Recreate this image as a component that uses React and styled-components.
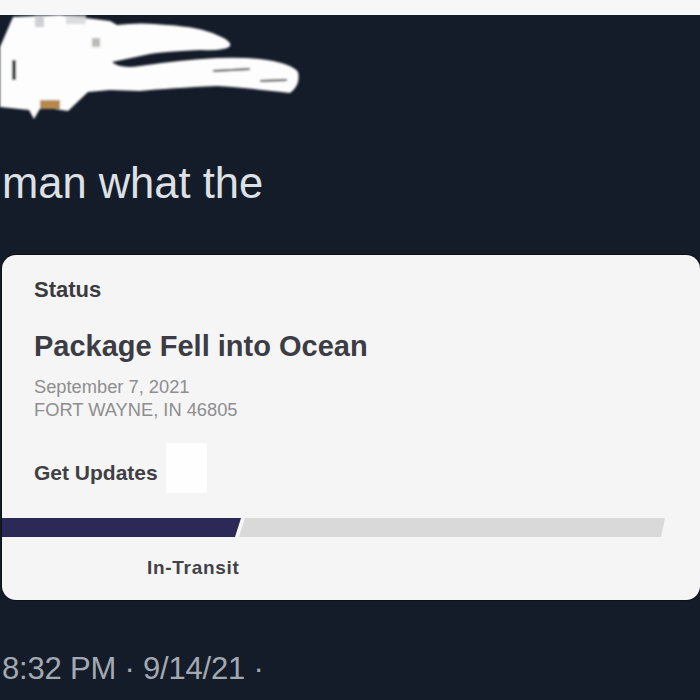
import React from 'react';
import styled, { createGlobalStyle } from 'styled-components';

const GlobalStyle = createGlobalStyle`
  html, body {
    margin: 0;
    padding: 0;
    background: #151c29;
  }
  body {
    font-family: "Liberation Sans", Arial, sans-serif;
  }
`;

const Screen = styled.div`
  width: 700px;
  height: 700px;
  overflow: hidden;
  background: #151c29;
  display: flex;
  flex-direction: column;
`;

const TopStrip = styled.div`
  height: 15px;
  flex-shrink: 0;
  background: #f7f7f7;
`;

const Header = styled.div`
  height: 100px;
  flex-shrink: 0;
  display: flex;
  align-items: flex-start;
`;

const TweetText = styled.p`
  margin: 43px 0 0 2px;
  font-size: 43.5px;
  line-height: 50px;
  color: #dde1e6;
`;

const Card = styled.div`
  margin: 47px 0 0 2px;
  width: 698px;
  height: 345px;
  box-sizing: border-box;
  flex-shrink: 0;
  background: #f5f5f5;
  border-radius: 14px;
  box-shadow: 0 0 0 1px rgba(0, 0, 0, 0.45);
  display: flex;
  flex-direction: column;
`;

const CardBody = styled.div`
  padding: 22px 32px 0;
  display: flex;
  flex-direction: column;
`;

const Label = styled.div`
  font-size: ${p => p.size || 22}px;
  line-height: ${p => p.lh || 26}px;
  font-weight: 700;
  color: ${p => p.color || '#3a3a3f'};
  letter-spacing: ${p => p.ls || 0}px;
`;

const Title = styled.h2`
  margin: 26px 0 0;
  font-size: 29px;
  line-height: 34px;
  font-weight: 700;
  color: #3b3c44;
`;

const Meta = styled.div`
  margin-top: 12px;
  font-size: 18.3px;
  line-height: 23px;
  color: #8e8e8e;
`;

const UpdatesRow = styled.div`
  margin-top: 22px;
  display: flex;
  align-items: flex-start;
  gap: 8px;
`;

const UpdatesText = styled(Label)`
  padding-top: 18px;
`;

const WhiteBox = styled.div`
  width: 41px;
  height: 50px;
  background: #fefefe;
`;

const Track = styled.div`
  margin-top: 25px;
  height: 19px;
  display: flex;
`;

const Segment = styled.div`
  height: 100%;
  width: ${p => p.w}px;
  margin-left: ${p => p.offset || 0}px;
  background: ${p => p.color};
  clip-path: ${p => p.clip};
`;

const StepLabel = styled(Label)`
  margin: 20px 0 0 145px;
`;

const Footer = styled.div`
  margin: 51px 0 0 2px;
  font-size: 31px;
  line-height: 36px;
  color: #a3a9b1;
  letter-spacing: -0.2px;
`;

// white marker scribble hiding the avatar and name
const Scribble = () => (
  <svg width="310" height="106" viewBox="0 0 310 106">
    <defs>
      <filter id="soft" x="-5%" y="-5%" width="110%" height="110%">
        <feGaussianBlur stdDeviation="0.9" />
      </filter>
    </defs>
    <g filter="url(#soft)">
      <path
        d="M13 2 L60 0 L110 6 L117 10 Q140 7 167 10 Q200 12 217 20 Q232 26 230 31 Q226 36 200 35 Q160 37 150 39 L112 47 Q120 54 140 51 Q180 45 217 43 Q250 42 267 45 Q292 49 298 57 Q301 70 290 78 Q240 72 217 71 Q170 73 140 76 L110 75 L88 77 L68 96 L41 92 L34 104 L29 95 L0 92 L0 32 Z"
        fill="#fdfdfd"
      />
      <rect x="35" y="0" width="9" height="12" fill="#c4c6c9" opacity="0.8" />
      <rect x="66" y="0" width="20" height="9" fill="#d2d4d6" opacity="0.8" />
      <rect x="92" y="23" width="8" height="9" fill="#a9aba6" opacity="0.8" />
      <rect x="12" y="45" width="4" height="20" fill="#2a2d33" />
      <rect x="40" y="85" width="20" height="9" fill="#b5884e" />
      <path d="M213 56 L250 54" stroke="#3a3d44" strokeWidth="2" />
      <path d="M260 66 L287 65" stroke="#3a3d44" strokeWidth="2" />
    </g>
  </svg>
);

const App = () => (
  <>
    <GlobalStyle />
    <Screen>
      <TopStrip />
      <Header>
        <Scribble />
      </Header>
      <TweetText>man what the</TweetText>
      <Card>
        <CardBody>
          <Label>Status</Label>
          <Title>Package Fell into Ocean</Title>
          <Meta>
            September 7, 2021
            <br />
            FORT WAYNE, IN 46805
          </Meta>
          <UpdatesRow>
            <UpdatesText size={21} lh={24} color="#3f3f44">Get Updates</UpdatesText>
            <WhiteBox />
          </UpdatesRow>
        </CardBody>
        <Track>
          <Segment
            w={239}
            color="#2d2957"
            clip="polygon(0 0, 100% 0, calc(100% - 6px) 100%, 0 100%)"
          />
          <Segment
            w={426}
            offset={-2}
            color="#d9d9d9"
            clip="polygon(6px 0, 100% 0, calc(100% - 4px) 100%, 0 100%)"
          />
        </Track>
        <StepLabel size={19} lh={22} ls={0.7} color="#434347">In-Transit</StepLabel>
      </Card>
      <Footer>8:32 PM · 9/14/21 ·</Footer>
    </Screen>
  </>
);

export default App;
